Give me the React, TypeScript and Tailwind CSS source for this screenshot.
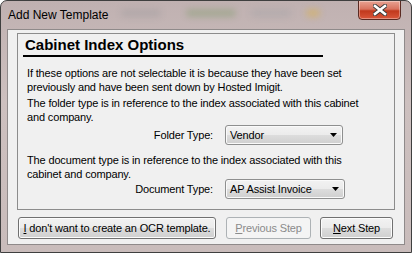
const font = "font-['Liberation_Sans',Arial,sans-serif]";
const body = "text-[11px] tracking-[-0.15px] whitespace-nowrap";

function WinButton({
  children,
  width,
  disabled = false,
}: {
  children: React.ReactNode;
  width: string;
  disabled?: boolean;
}) {
  if (disabled) {
    return (
      <div
        className={`${width} h-[22px] rounded-[3px] border border-[#adb2b5] bg-[#f4f4f4] text-[#8b8b8b] flex items-center justify-center ${body}`}
      >
        {children}
      </div>
    );
  }
  return (
    <div
      className={`${width} h-[22px] rounded-[3px] border border-[#707070] bg-[linear-gradient(#f2f2f2_0%,#ebebeb_50%,#dddddd_50%,#cfcfcf_100%)] shadow-[inset_0_0_0_1px_#fcfcfc] text-black flex items-center justify-center ${body}`}
    >
      {children}
    </div>
  );
}

function Combo({ value, width }: { value: string; width: string }) {
  return (
    <div
      className={`${width} h-[20px] rounded-[3px] border border-[#8e8f8f] bg-[linear-gradient(#f2f2f2_0%,#ebebeb_50%,#dddddd_50%,#cfcfcf_100%)] shadow-[inset_0_0_0_1px_#fafafa] flex items-center pl-[4px] pr-[5px]`}
    >
      <span className={`flex-1 leading-none ${body}`}>{value}</span>
      <svg width="7" height="4" viewBox="0 0 7 4">
        <path d="M0 0h7L3.5 4z" fill="#000" />
      </svg>
    </div>
  );
}

export default function App() {
  return (
    <div className={`w-[412px] h-[253px] ${font} text-black`}>
      <div className="w-full h-full rounded-t-[7px] border border-[#3f3f3f] bg-[linear-gradient(180deg,#c0b1b1_0%,#cdc0bf_40%,#c9bcbb_100%)] flex flex-col relative overflow-hidden">
        <div className="h-[28px] flex items-center pl-[7px] relative">
          <div className="absolute left-[120px] top-[8px] w-[40px] h-[8px] rounded bg-[#9d9a9c] opacity-40 blur-[3px]" />
          <div className="absolute left-[185px] top-[8px] w-[50px] h-[8px] rounded bg-[#7d9a68] opacity-40 blur-[3px]" />
          <div className="absolute left-[250px] top-[8px] w-[40px] h-[8px] rounded bg-[#a2a2a6] opacity-40 blur-[3px]" />
          <div className="absolute left-[305px] top-[8px] w-[14px] h-[8px] rounded bg-[#d8b25a] opacity-60 blur-[3px]" />
          <span className="text-[12px] text-black">Add New Template</span>
          <div className="absolute right-[10px] top-[-1px] w-[43px] h-[20px] rounded-b-[4px] border border-[#5a2a22] bg-[linear-gradient(#e8a393_0%,#d8735f_45%,#c1391d_55%,#d9563a_100%)] shadow-[inset_0_0_0_1px_rgba(255,255,255,0.35)] flex items-center justify-center">
            <svg width="14" height="12" viewBox="0 0 14 12">
              <path
                d="M2 2l10 8M12 2l-10 8"
                stroke="#3b3b3b"
                strokeWidth="4.4"
                strokeLinecap="square"
              />
              <path
                d="M2 2l10 8M12 2l-10 8"
                stroke="#ffffff"
                strokeWidth="2.6"
                strokeLinecap="square"
              />
            </svg>
          </div>
        </div>
        <div className="flex-1 px-[6px] pb-[7px] flex">
          <div className="flex-1 border border-[#8f8a8a] bg-[#f0f0f0] px-[9px] pt-[3px] flex flex-col">
            <div className="h-[177px] border border-[#8c8c8c] flex flex-col pl-[5px]">
              <div className="w-[300px] h-[23px] border-b-2 border-black flex items-center pl-[2px]">
                <span className="text-[15px] font-bold leading-none">
                  Cabinet Index Options
                </span>
              </div>
              <div className={`pl-[4px] pt-[9px] leading-[14px] ${body}`}>
                <p>
                  If these options are not selectable it is because they have
                  been set
                  <br />
                  previously and have been sent down by Hosted Imigit.
                </p>
                <p className="mt-[2px]">
                  The folder type is in reference to the index associated with
                  this cabinet
                  <br />
                  and company.
                </p>
              </div>
              <div className="flex items-center mt-[1px]">
                <span className={`w-[190px] text-right ${body}`}>
                  Folder Type:
                </span>
                <div className="ml-[12px]">
                  <Combo value="Vendor" width="w-[118px]" />
                </div>
              </div>
              <p className={`pl-[4px] mt-[8px] leading-[14px] ${body}`}>
                The document type is in reference to the index associated with
                this
                <br />
                cabinet and company.
              </p>
              <div className="flex items-center -mt-[2px]">
                <span className={`w-[190px] text-right ${body}`}>
                  Document Type:
                </span>
                <div className="ml-[12px]">
                  <Combo value="AP Assist Invoice" width="w-[120px]" />
                </div>
              </div>
            </div>
            <div className="flex items-center mt-[7px] ml-[1px]">
              <WinButton width="w-[198px]">
                <span>
                  <span className="underline">I</span> don't want to create an
                  OCR template.
                </span>
              </WinButton>
              <div className="ml-[10px]">
                <WinButton width="w-[85px]" disabled>
                  <span>
                    <span className="underline">P</span>revious Step
                  </span>
                </WinButton>
              </div>
              <div className="ml-[9px]">
                <WinButton width="w-[73px]">
                  <span>
                    <span className="underline">N</span>ext Step
                  </span>
                </WinButton>
              </div>
            </div>
          </div>
        </div>
      </div>
    </div>
  );
}
